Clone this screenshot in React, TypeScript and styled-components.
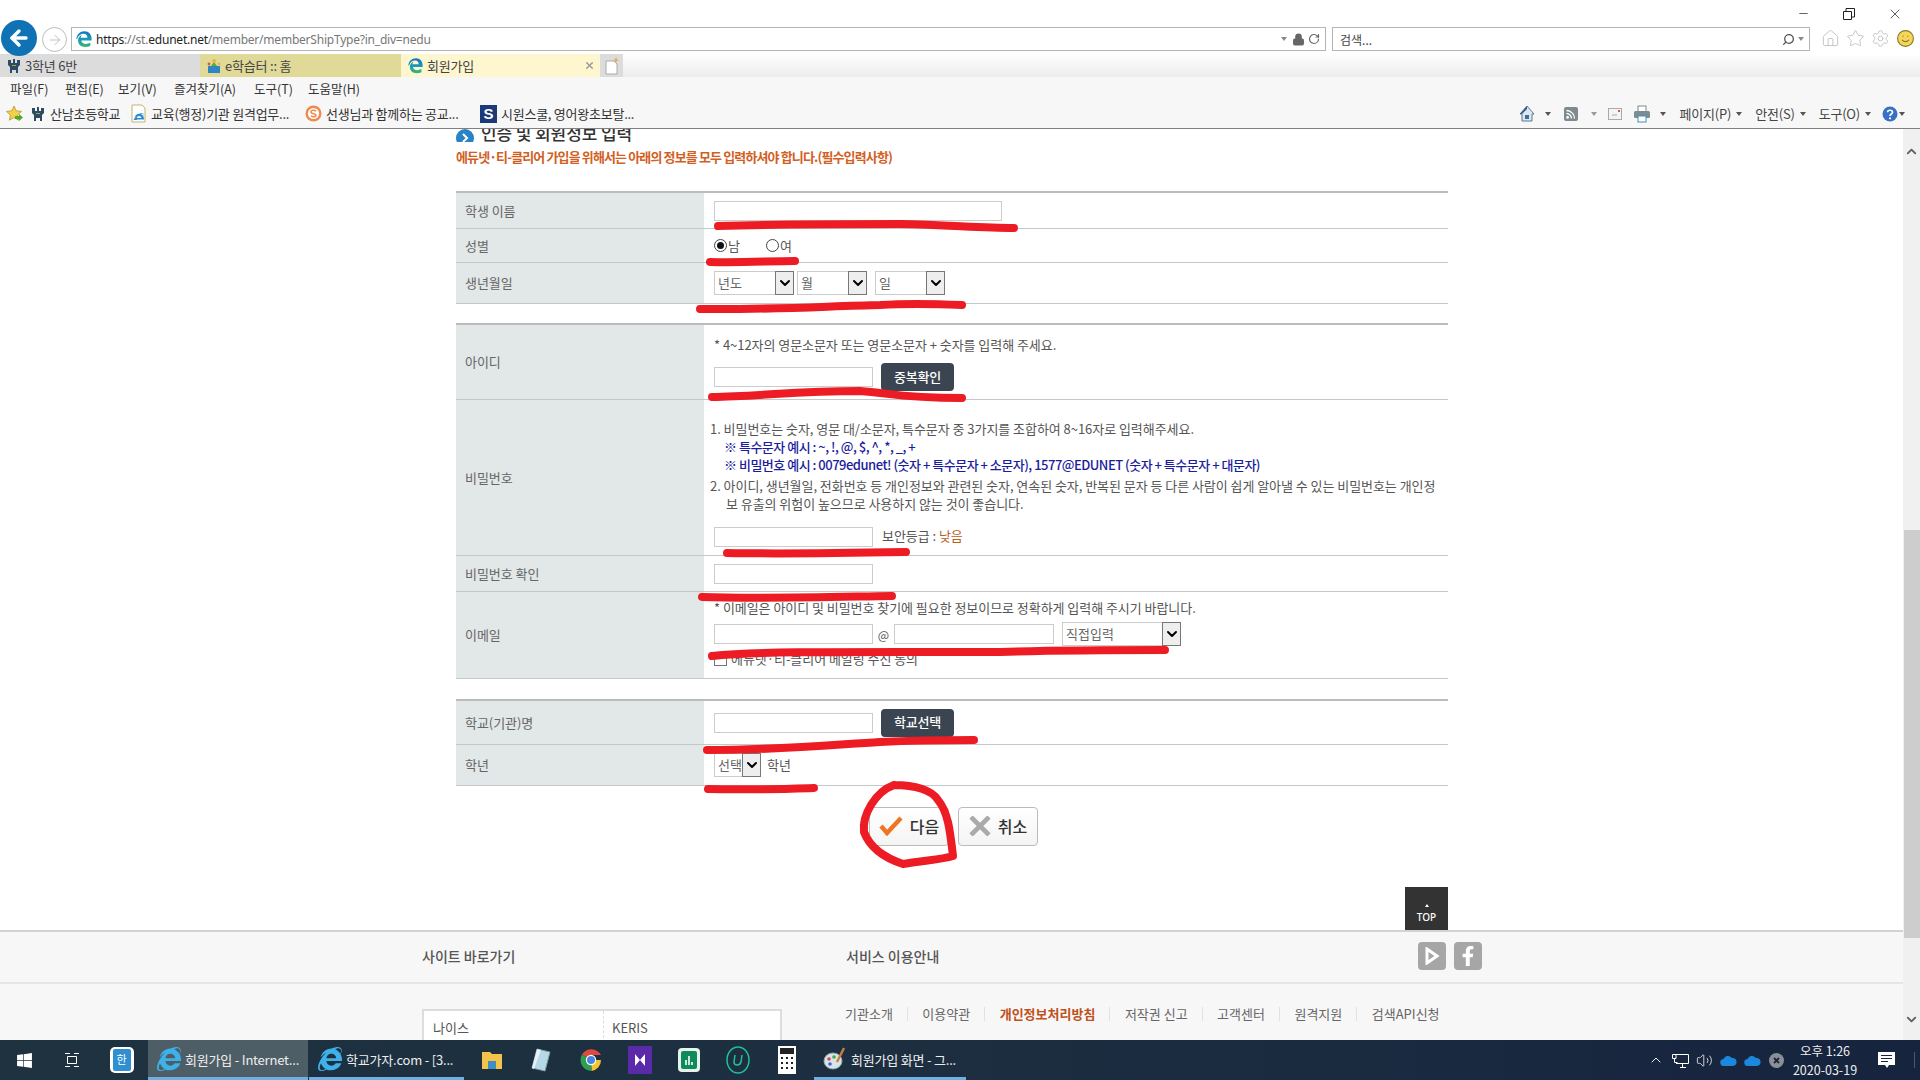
import React from 'react';
import styled, { createGlobalStyle } from 'styled-components';
import { ArrowLeft, ArrowRight, ChevronUp, ChevronDown, Home, Star, Settings, Smile, RotateCw, Lock, Search, Minus, X, Volume2 } from 'lucide-react';
import { FaInternetExplorer, FaFacebookF, FaWindows } from 'react-icons/fa';

const Global = createGlobalStyle`
  html, body { margin: 0; padding: 0; background: #fff; overflow: hidden; }
  * { box-sizing: border-box; }
  body { font-family: "Noto Sans CJK KR", "Noto Sans", sans-serif; }
`;

const Screen = styled.div`
  position: relative; width: 1920px; height: 1080px; overflow: hidden;
  display: flex; flex-direction: column; color: #333;
  font-family: "Noto Sans CJK KR", "Noto Sans", sans-serif;
`;

/* browser chrome */
const Chrome = styled.header`
  height: 129px; flex: none; display: flex; flex-direction: column;
  border-bottom: 1px solid #808080; background: #f7f7f7;
`;
const TitleBar = styled.div`
  height: 27px; background: #fff; display: flex; justify-content: flex-end; align-items: center;
  padding-right: 2px; color: #222;
`;
const WinBtn = styled.div`
  width: 46px; height: 27px; display: flex; align-items: center; justify-content: center;
`;
const AddressRow = styled.div`
  height: 27px; background: #fff; display: flex; align-items: flex-start; position: relative;
`;
const BackCircle = styled.div`
  width: 36px; height: 36px; border-radius: 50%; background: #0f72b5; color: #fff; flex: none;
  margin: -7px 0 0 1px; display: flex; align-items: center; justify-content: center; z-index: 1;
`;
const ForwardCircle = styled.div`
  width: 25px; height: 25px; border-radius: 50%; border: 1px solid #bbb; color: #bbb; flex: none;
  margin: 0 4px 0 5px; display: flex; align-items: center; justify-content: center;
`;
const FieldBox = styled.div<{ $w: number; $ml?: number; $pl?: number }>`
  width: ${p => p.$w}px; margin-left: ${p => p.$ml ?? 0}px; height: 24px; border: 1px solid #b4b4b4; flex: none;
  display: flex; align-items: center; padding: 0 5px 0 ${p => p.$pl ?? 5}px; font-size: 12px; color: #444; gap: 3px; background: #fff;
`;
const UrlText = styled.span`
  font-family: "Noto Sans", sans-serif; color: #777; font-size: 12px; letter-spacing: -0.22px;
  b { font-weight: 400; color: #222; }
`;
const Grow = styled.div`flex: 1;`;
const SmallTri = styled.span<{ $c?: string }>`
  width: 0; height: 0; flex: none; border-left: 3.5px solid transparent; border-right: 3.5px solid transparent;
  border-top: 4px solid ${p => p.$c ?? '#555'};
`;
const TopIcons = styled.div`
  display: flex; gap: 6px; margin-left: 11px; margin-top: 2px; color: #bdbdbd;
`;
const TabRow = styled.div`
  height: 23px; display: flex; background: linear-gradient(#fff, #ececec);
`;
const Tab = styled.div<{ $bg: string; $w: number }>`
  width: ${p => p.$w}px; background: ${p => p.$bg}; display: flex; align-items: center; gap: 3px;
  padding-left: 6px; font-size: 13px; color: #444; flex: none; letter-spacing: -0.2px;
`;
const TabClose = styled.span`
  margin-left: auto; margin-right: 5px; color: #999; display: flex;
`;
const NewTab = styled.div`
  width: 23px; background: #dcdcdc; flex: none; display: flex; align-items: center; justify-content: center;
`;
const MenuRow = styled.div`
  height: 22px; display: flex; align-items: center; padding-left: 10px; font-size: 12.5px; color: #333;
`;
const MenuItem = styled.span<{ $w?: number }>`
  width: ${p => (p.$w ? `${p.$w}px` : 'auto')}; flex: none;
`;
const FavRow = styled.div`
  height: 29px; display: flex; align-items: center; font-size: 13px; color: #333; padding: 0 15px 0 6px;
`;
const FavStar = styled.div`width: 24px; flex: none; display: flex;`;
const FavItem = styled.div<{ $w: number }>`
  width: ${p => p.$w}px; flex: none; display: flex; align-items: center; gap: 4px; letter-spacing: -0.25px;
`;
const Tools = styled.div`
  margin-left: auto; display: flex; align-items: center; color: #444;
`;
const ToolIcon = styled.span<{ $ml: number }>`
  margin-left: ${p => p.$ml}px; display: flex; align-items: center; gap: 5px; white-space: nowrap; font-size: 13px; letter-spacing: -0.2px;
`;

/* page */
const Viewport = styled.main`flex: 1; display: flex; min-height: 0;`;
const Page = styled.div`flex: 1; min-width: 0; overflow: hidden; background: #fff; display: flex; flex-direction: column;`;
const Content = styled.div`width: 992px; margin-left: 456px; flex: none;`;
const TitleClip = styled.div`
  height: 13px; overflow: hidden; display: flex; align-items: flex-end; gap: 7px;
`;
const TitleBullet = styled.span`
  width: 18px; height: 18px; border-radius: 50%; background: #2a83c4; color: #fff; flex: none; margin-bottom: -5px;
  display: flex; align-items: center; justify-content: center;
`;
const TitleText = styled.h2`
  margin: 0 0 -3px; font-size: 17px; line-height: 24px; font-weight: 500; color: #333; letter-spacing: -0.1px;
`;
const Warning = styled.p`
  margin: 0; height: 49px; padding-top: 5px; font-size: 13px; line-height: 20px; font-weight: 700;
  color: #d2601f; letter-spacing: -0.87px;
`;
const Table = styled.section<{ $mt?: number }>`
  border-top: 2px solid #bcbcbc; margin-top: ${p => p.$mt ?? 0}px;
`;
const Row = styled.div<{ $h: number }>`
  height: ${p => p.$h}px; display: grid; grid-template-columns: 248px 1fr; border-bottom: 1px solid #c4c8c8;
`;
const Label = styled.div`
  background: #e2e7e7; display: flex; align-items: center; padding: 0 0 1px 9px; font-size: 13px; color: #666; letter-spacing: -0.05px;
`;
const Cell = styled.div<{ $pt?: number }>`
  padding: ${p => p.$pt ?? 0}px 0 0 10px; display: flex; flex-direction: column;
  justify-content: ${p => (p.$pt === undefined ? 'center' : 'flex-start')};
  font-size: 13px; color: #555;
`;
const Line = styled.div<{ $gap?: number; $mt?: number }>`
  display: flex; align-items: center; gap: ${p => p.$gap ?? 8}px; margin-top: ${p => p.$mt ?? 0}px; flex: none;
`;
const TextInput = styled.input<{ $w?: number }>`
  width: ${p => p.$w ?? 159}px; height: 20px; border: 1px solid #ccc; background: #fff; padding: 0; margin: 0; flex: none; outline: none;
`;
const DarkBtn = styled.button`
  width: 73px; height: 28px; border: 0; border-radius: 4px; background: #3b4552; color: #fff; font: 500 13px "Noto Sans CJK KR", sans-serif;
  padding: 0 0 2px; flex: none; letter-spacing: -0.2px;
`;
const RadioLabel = styled.span<{ $w: number }>`
  width: ${p => p.$w}px; display: flex; align-items: center; gap: 1px; font-size: 13px; flex: none;
`;
const RadioDot = styled.span<{ $on?: boolean }>`
  width: 13px; height: 13px; border-radius: 50%; border: 1px solid #444; background: #fff; flex: none;
  display: flex; align-items: center; justify-content: center;
  &::after { content: ''; width: 7px; height: 7px; border-radius: 50%; background: ${p => (p.$on ? '#111' : 'transparent')}; }
`;
const Select = styled.div<{ $w: number; $ml?: number }>`
  width: ${p => p.$w}px; margin-left: ${p => p.$ml ?? 0}px; height: 24px; border: 1px solid #ccc; background: #fff; display: flex; align-items: center;
  padding: 0 0 1px 3px; font-size: 13px; color: #666; flex: none; justify-content: space-between;
`;
const SelectArrow = styled.span`
  width: 19px; height: 24px; border: 1px solid #777; background: #eee; color: #000; display: flex; align-items: center; justify-content: center; margin: 0 -1px -1px 0; flex: none;
`;
const Help = styled.div<{ $ml?: number; $mt?: number; $c?: string; $b?: boolean }>`
  line-height: 18px; white-space: nowrap; margin-left: ${p => p.$ml ?? 0}px; margin-top: ${p => p.$mt ?? 0}px;
  color: ${p => p.$c ?? '#555'}; font-weight: ${p => (p.$b ? 500 : 400)}; letter-spacing: ${p => (p.$b ? '-0.5px' : '-0.05px')}; font-size: 13px;
`;
const SecurityText = styled(Help)`margin: -2px 0 0 1px;`;
const Low = styled.span`color: #b8601f;`;
const AtMark = styled.span`width: 13px; flex: none; text-align: center; font-size: 12px;`;
const CheckBoxMark = styled.span`
  width: 13px; height: 13px; border: 1px solid #777; background: #fff; flex: none;
`;
const Actions = styled.div`
  display: flex; gap: 9px; margin: 21px 0 0 413px;
`;
const ActionBtn = styled.button`
  width: 80px; height: 39px; border: 1px solid #bbb; border-radius: 4px; background: linear-gradient(#fff, #f4f4f4);
  display: flex; align-items: center; justify-content: center; gap: 7px; font: 500 16px "Noto Sans CJK KR", sans-serif; color: #333; padding: 0 0 2px;
`;
const TopWrap = styled.div`display: flex; justify-content: flex-end; margin-top: 41px;`;
const TopBtn = styled.div`
  width: 43px; height: 43px; background: #333; color: #fff; display: flex; flex-direction: column; align-items: center; justify-content: flex-end;
  font: 500 10px "Noto Sans", sans-serif; padding-bottom: 6px; gap: 3px;
`;
const TopTri = styled.span`
  width: 0; height: 0; border-left: 2.5px solid transparent; border-right: 2.5px solid transparent; border-bottom: 3px solid #fff;
`;
const Footer = styled.footer`
  flex: 1; background: #f7f7f7; border-top: 2px solid #d2d2d2; display: flex; flex-direction: column;
`;
const FootHead = styled.div`
  height: 52px; border-bottom: 2px solid #e6e6e6; display: flex; align-items: center; padding: 0 0 2px 422px;
  font-size: 14px; font-weight: 500; color: #555; flex: none; letter-spacing: 0;
`;
const FootTitle = styled.span<{ $w?: number }>`width: ${p => (p.$w ? `${p.$w}px` : 'auto')}; flex: none;`;
const Social = styled.div`display: flex; gap: 8px; margin-left: 479px;`;
const SocialIcon = styled.span`
  width: 28px; height: 28px; border-radius: 4px; background: #a6a6a6; color: #fff; display: flex; align-items: center; justify-content: center;
`;
const FootBody = styled.div`display: flex; padding: 25px 0 0 422px;`;
const SiteBox = styled.div`
  width: 360px; height: 60px; background: #fff; border: 2px solid #ddd; display: grid; grid-template-columns: 179px 1fr; font-size: 13px; color: #555; flex: none;
`;
const SiteCell = styled.div`
  padding: 7px 0 0 9px; & + & { border-left: 1px dashed #ddd; padding-left: 8px; }
`;
const Links = styled.nav`display: flex; margin: -2px 0 0 63px; height: 14px; align-items: center; font-size: 13px; color: #666; letter-spacing: 0;`;
const LinkItem = styled.a<{ $on?: boolean }>`
  padding: 0 14px 0 14.5px; color: ${p => (p.$on ? '#c0501a' : '#666')}; font-weight: ${p => (p.$on ? 700 : 400)}; white-space: nowrap;
  border-right: 1px solid #e2e2e2; line-height: 14px;
  &:first-child { padding-left: 0; }
  &:last-child { border-right: 0; padding-right: 0; }
`;
const Scrollbar = styled.aside`
  width: 17px; flex: none; background: #f0f0f0; display: flex; flex-direction: column; align-items: center; color: #606060;
`;
const ScrollArrow = styled.div<{ $mt?: number }>`height: 22px; flex: none; display: flex; align-items: center; justify-content: center; margin-top: ${p => p.$mt ?? 0}px;`;
const Thumb = styled.div`width: 16px; height: 408px; background: #cdcdcd; margin-top: 368px; flex: none;`;

/* taskbar */
const Taskbar = styled.footer`
  height: 40px; flex: none; background: linear-gradient(90deg, #1e3240, #1c2e40 50%, #16243e); display: flex; align-items: stretch; color: #eee; font-size: 13px;
`;
const TaskIcon = styled.div<{ $w: number }>`
  width: ${p => p.$w}px; flex: none; display: flex; align-items: center; justify-content: center;
`;
const HanBadge = styled.div`
  width: 24px; height: 26px; border-radius: 5px; background: #fff; padding: 2px 3px; display: flex;
`;
const HanInner = styled.span`
  flex: 1; background: #2f8fd0; color: #fff; border-radius: 2px; font-size: 11px; line-height: 21px; text-align: center;
`;
const TaskApp = styled.div<{ $w: number; $active?: boolean; $ml?: number }>`
  width: ${p => p.$w}px; margin-left: ${p => p.$ml ?? 0}px; flex: none; display: flex; align-items: center; gap: 4px; padding: 1px 0 0 9px;
  background: ${p => (p.$active ? '#4e5e66' : 'transparent')}; border-bottom: 3px solid #6fb0e0; white-space: nowrap; overflow: hidden; letter-spacing: -0.2px;
`;
const Tray = styled.div`
  margin-left: auto; display: flex; align-items: center; padding-right: 5px;
`;
const TrayIcon = styled.div`width: 24px; flex: none; display: flex; align-items: center; justify-content: center;`;
const Clock = styled.div`
  width: 76px; margin-left: -1px; text-align: center; font: 12.5px/19px "Noto Sans CJK KR", sans-serif; flex: none; white-space: nowrap;
`;
const Notify = styled.div`
  width: 56px; margin-left: -4px; flex: none; display: flex; align-items: center; justify-content: center; border-right: 1px solid #556;
`;
const Ink = styled.svg`
  position: absolute; left: 0; top: 0; width: 1920px; height: 1080px; pointer-events: none; z-index: 5;
`;

const EdgeE = ({ s = 18 }: { s?: number }) => (
  <svg width={s} height={s} viewBox="0 0 20 20" style={{ flex: 'none' }}>
    <defs>
      <linearGradient id="edgeGrad" x1="0" y1="0" x2="0" y2="1">
        <stop offset="0" stopColor="#1377bd" />
        <stop offset="0.6" stopColor="#1aa0b4" />
        <stop offset="1" stopColor="#3db66f" />
      </linearGradient>
    </defs>
    <path fill="url(#edgeGrad)" d="M1.5 10C2 5 5.5 1.5 10.5 1.5c5 0 8 3.6 8 9v1.2H7c.3 2.6 2.5 3.8 5 3.8 1.8 0 3.4-.5 5-1.3v3.6c-1.5.8-3.4 1.2-5.6 1.2-5 0-8-3-8-7.2 0-2.6 1.5-5 4.6-6.4-1 .9-1.6 1.9-1.8 3.2h7.6c0-2.6-1.6-4.4-4.2-4.4-3.4 0-6.2 2.3-7.1 5.8z" />
  </svg>
);
const SchoolIcon = ({ s = 16 }: { s?: number }) => (
  <svg width={s} height={s} viewBox="0 0 16 16" style={{ flex: 'none' }}>
    <path d="M2 2h3v3h2V1h2v4h2V2h3v5l-2 2v6H10v-3H6v3H4V9L2 7z" fill="#2f4a63" />
    <path d="M6 7h4v1H6z" fill="#8fb23f" />
  </svg>
);
const KidsIcon = () => (
  <svg width="16" height="16" viewBox="0 0 16 16" style={{ flex: 'none' }}>
    <path d="M2 8h12v7H2z" fill="#2f86c4" />
    <path d="M5 8l3-4 3 4z" fill="#57ad3f" />
    <circle cx="8" cy="3" r="2" fill="#e8b93c" />
    <circle cx="3" cy="6" r="1.4" fill="#d9573f" />
    <circle cx="13" cy="6" r="1.4" fill="#e8b93c" />
  </svg>
);
const IeBadge = () => (
  <svg width="17" height="19" viewBox="0 0 17 19" style={{ flex: 'none' }}>
    <path d="M2 1h10l3 3v14H2z" fill="#fff" stroke="#c8b26a" />
    <foreignObject x="3" y="5" width="11" height="11"><FaInternetExplorer size={11} color="#2a8bd0" /></foreignObject>
  </svg>
);
const OrangeS = () => (
  <svg width="17" height="17" viewBox="0 0 17 17" style={{ flex: 'none' }}>
    <circle cx="8.5" cy="8.5" r="8" fill="#ef8a4a" />
    <circle cx="8.5" cy="8.5" r="5.6" fill="#fff" />
    <path d="M11 6.2C9.5 4.8 6 5 6 7c0 2.4 5 1 5 3.2 0 2-3.6 2-5 .6" stroke="#ef8a4a" strokeWidth="1.6" fill="none" />
  </svg>
);
const NavyS = styled.span`
  width: 17px; height: 18px; background: #1c3a78; color: #fff; font: 700 15px/18px "Liberation Sans", sans-serif; text-align: center; flex: none; letter-spacing: 0;
`;
const FavStarIcon = () => (
  <svg width="18" height="18" viewBox="0 0 18 18">
    <path d="M8 1l2.2 4.8 5.3.6-3.9 3.6 1 5.2L8 12.6 3.4 15.2l1-5.2L.5 6.4l5.3-.6z" fill="#f4cf4c" stroke="#b8932b" strokeWidth=".8" />
    <path d="M9 11h4V9l4 3.5L13 16v-2H9z" fill="#4fa82e" />
  </svg>
);
const ColorHome = () => (
  <svg width="16" height="17" viewBox="0 0 16 17">
    <path d="M8 1L1 9h2v7h10V9h2z" fill="#dfe7ee" stroke="#5d7990" />
    <path d="M8 1L1 9h2l5-5z" fill="#2d5c8a" />
    <rect x="6" y="10" width="4" height="4" fill="#3b6fa0" />
  </svg>
);
const FeedIcon = () => (
  <svg width="14" height="14" viewBox="0 0 14 14">
    <rect width="14" height="14" rx="2" fill="#7f8a8f" />
    <circle cx="3.6" cy="10.4" r="1.4" fill="#fff" />
    <path d="M2.5 6.5a5 5 0 015 5M2.5 3.5a8 8 0 018 8" stroke="#fff" strokeWidth="1.3" fill="none" />
  </svg>
);
const MailIcon = () => (
  <svg width="14" height="12" viewBox="0 0 14 12">
    <rect x=".5" y=".5" width="13" height="11" fill="#f4f4f4" stroke="#aaa" />
    <path d="M4 7h5" stroke="#aaa" />
    <rect x="10" y="2" width="2" height="2" fill="#d55" />
  </svg>
);
const PrintIcon = () => (
  <svg width="18" height="18" viewBox="0 0 18 18">
    <rect x="5" y="1" width="8" height="6" fill="#fff" stroke="#888" />
    <rect x="1" y="6" width="16" height="7" rx="1.5" fill="#7c8c94" />
    <rect x="5" y="11" width="8" height="6" fill="#fff" stroke="#3f93b5" />
  </svg>
);
const HelpBall = () => (
  <svg width="16" height="16" viewBox="0 0 16 16">
    <circle cx="8" cy="8" r="7.5" fill="#3770c4" />
    <path d="M5.5 6.2C5.6 3.6 10.5 3.6 10.5 6.2 10.5 8 8 8 8 10" stroke="#fff" strokeWidth="1.7" fill="none" />
    <circle cx="8" cy="12.3" r="1.1" fill="#fff" />
  </svg>
);
const PageNew = () => (
  <svg width="16" height="18" viewBox="0 0 16 18">
    <path d="M2 4h8l3 3v10H2z" fill="#fff" stroke="#aaa" />
    <path d="M12 0l.8 2.4L15 3l-2.2.8L12 6l-.8-2.2L9 3l2.2-.6z" fill="#f0a52c" />
  </svg>
);
const ChromeLogo = () => (
  <svg width="24" height="24" viewBox="0 0 24 24">
    <path d="M12 12L3 6.5A11 11 0 0122 7H12z" fill="#dd4b3e" />
    <path d="M12 12H22A11 11 0 0112.5 23z" fill="#f4c430" />
    <path d="M12 12l.5 11A11 11 0 013 6.5z" fill="#2f9e4f" />
    <circle cx="12" cy="12" r="5.2" fill="#fff" />
    <circle cx="12" cy="12" r="4" fill="#4a86e0" />
  </svg>
);
const Chev = ({ s = 16 }: { s?: number }) => <ChevronDown size={s} strokeWidth={3} />;

const Select3 = ({ w, t, ml }: { w: number; t: string; ml?: number }) => (
  <Select $w={w} $ml={ml}><span>{t}</span><SelectArrow><Chev /></SelectArrow></Select>
);

const TaskE = () => <FaInternetExplorer size={24} color="#3fb1ea" style={{ flex: 'none' }} />;
const Cloud = () => (
  <svg width="17" height="11" viewBox="0 0 17 11"><path d="M4 11a3.5 3.5 0 01-.5-7A5 5 0 0112 3a4 4 0 011 8z" fill="#1b88db" /></svg>
);

const App: React.FC = () => (
  <Screen>
    <Global />
    <Chrome>
      <TitleBar>
        <WinBtn><Minus size={13} strokeWidth={1.3} /></WinBtn>
        <WinBtn><svg width="12" height="12" viewBox="0 0 12 12" fill="none" stroke="#222"><path d="M.5 3.5h8v8h-8zM3 3V.5h8.5V9H9" /></svg></WinBtn>
        <WinBtn><X size={16} strokeWidth={1.1} /></WinBtn>
      </TitleBar>
      <AddressRow>
        <BackCircle><ArrowLeft size={24} strokeWidth={3.4} /></BackCircle>
        <ForwardCircle><ArrowRight size={16} strokeWidth={1.4} /></ForwardCircle>
        <FieldBox $w={1255} $pl={3}>
          <EdgeE />
          <UrlText><b>https</b>://st.<b>edunet.net</b>/member/memberShipType?in_div=nedu</UrlText>
          <Grow />
          <SmallTri $c="#888" />
          <Lock size={13} color="#666" fill="#666" style={{ marginLeft: 2 }} />
          <RotateCw size={12} color="#666" strokeWidth={2.4} />
        </FieldBox>
        <FieldBox $w={478} $ml={6} $pl={7}>
          검색...
          <Grow />
          <Search size={13} color="#555" strokeWidth={2.4} style={{ transform: 'scaleX(-1)' }} />
          <SmallTri $c="#888" />
        </FieldBox>
        <TopIcons>
          <Home size={19} strokeWidth={1.1} />
          <Star size={19} strokeWidth={1.1} />
          <Settings size={19} strokeWidth={1.1} />
          <Smile size={19} strokeWidth={1.4} color="#8a7a2a" fill="#f3d65a" />
        </TopIcons>
      </AddressRow>
      <TabRow>
        <Tab $bg="#dcdcdc" $w={200}><SchoolIcon />3학년 6반</Tab>
        <Tab $bg="#e0d998" $w={201}><KidsIcon />e학습터 :: 홈</Tab>
        <Tab $bg="#fdf6cf" $w={199}><EdgeE s={17} />회원가입<TabClose><X size={11} strokeWidth={3} /></TabClose></Tab>
        <NewTab><PageNew /></NewTab>
      </TabRow>
      <MenuRow>
        <MenuItem $w={55}>파일(F)</MenuItem>
        <MenuItem $w={53}>편집(E)</MenuItem>
        <MenuItem $w={56}>보기(V)</MenuItem>
        <MenuItem $w={80}>즐겨찾기(A)</MenuItem>
        <MenuItem $w={54}>도구(T)</MenuItem>
        <MenuItem>도움말(H)</MenuItem>
      </MenuRow>
      <FavRow>
        <FavStar><FavStarIcon /></FavStar>
        <FavItem $w={100}><SchoolIcon />산남초등학교</FavItem>
        <FavItem $w={175}><IeBadge />교육(행정)기관 원격업무...</FavItem>
        <FavItem $w={175}><OrangeS />선생님과 함께하는 공교...</FavItem>
        <FavItem $w={160}><NavyS>S</NavyS>시원스쿨, 영어왕초보탈...</FavItem>
        <Tools>
          <ToolIcon $ml={0}><ColorHome /></ToolIcon>
          <ToolIcon $ml={10}><SmallTri /></ToolIcon>
          <ToolIcon $ml={13}><FeedIcon /></ToolIcon>
          <ToolIcon $ml={13}><SmallTri $c="#999" /></ToolIcon>
          <ToolIcon $ml={11}><MailIcon /></ToolIcon>
          <ToolIcon $ml={11}><PrintIcon /></ToolIcon>
          <ToolIcon $ml={9}><SmallTri /></ToolIcon>
          <ToolIcon $ml={13}>페이지(P)<SmallTri /></ToolIcon>
          <ToolIcon $ml={13}>안전(S)<SmallTri /></ToolIcon>
          <ToolIcon $ml={13}>도구(O)<SmallTri /></ToolIcon>
          <ToolIcon $ml={11}><HelpBall /></ToolIcon>
          <ToolIcon $ml={1}><SmallTri /></ToolIcon>
        </Tools>
      </FavRow>
    </Chrome>
    <Viewport>
      <Page>
        <Content>
          <TitleClip>
            <TitleBullet><svg width="8" height="10" viewBox="0 0 8 10" fill="none" stroke="#fff" strokeWidth="2"><path d="M2 1l4 4-4 4" /></svg></TitleBullet>
            <TitleText>인증 및 회원정보 입력</TitleText>
          </TitleClip>
          <Warning>에듀넷·티-클리어 가입을 위해서는 아래의 정보를 모두 입력하셔야 합니다.(필수입력사항)</Warning>
          <Table>
            <Row $h={36}><Label>학생 이름</Label><Cell><TextInput $w={288} /></Cell></Row>
            <Row $h={34}><Label>성별</Label><Cell><Line $gap={0}><RadioLabel $w={52}><RadioDot $on />남</RadioLabel><RadioLabel $w={40}><RadioDot />여</RadioLabel></Line></Cell></Row>
            <Row $h={41}><Label>생년월일</Label><Cell><Line $gap={3}><Select3 w={80} t="년도" /><Select3 w={70} t="월" /><Select3 w={70} t="일" ml={5} /></Line></Cell></Row>
          </Table>
          <Table $mt={19}>
            <Row $h={75}>
              <Label>아이디</Label>
              <Cell $pt={11}>
                <Help>* 4~12자의 영문소문자 또는 영문소문자 + 숫자를 입력해 주세요.</Help>
                <Line $mt={9}><TextInput /><DarkBtn>중복확인</DarkBtn></Line>
              </Cell>
            </Row>
            <Row $h={156}>
              <Label>비밀번호</Label>
              <Cell $pt={20}>
                <Help $ml={-4}>1. 비밀번호는 숫자, 영문 대/소문자, 특수문자 중 3가지를 조합하여 8~16자로 입력해주세요.</Help>
                <Help $ml={10} $c="#1c1c9e" $b>※ 특수문자 예시 : ~, !, @, $, ^, *, _, +</Help>
                <Help $ml={10} $c="#1c1c9e" $b>※ 비밀번호 예시 : 0079edunet! (숫자 + 특수문자 + 소문자), 1577@EDUNET (숫자 + 특수문자 + 대문자)</Help>
                <Help $ml={-4} $mt={3}>2. 아이디, 생년월일, 전화번호 등 개인정보와 관련된 숫자, 연속된 숫자, 반복된 문자 등 다른 사람이 쉽게 알아낼 수 있는 비밀번호는 개인정</Help>
                <Help $ml={12}>보 유출의 위험이 높으므로 사용하지 않는 것이 좋습니다.</Help>
                <Line $mt={14}><TextInput /><SecurityText>보안등급 : <Low>낮음</Low></SecurityText></Line>
              </Cell>
            </Row>
            <Row $h={36}><Label>비밀번호 확인</Label><Cell><TextInput /></Cell></Row>
            <Row $h={87}>
              <Label>이메일</Label>
              <Cell $pt={7}>
                <Help>* 이메일은 아이디 및 비밀번호 찾기에 필요한 정보이므로 정확하게 입력해 주시기 바랍니다.</Help>
                <Line $mt={5} $gap={4}><TextInput /><AtMark>@</AtMark><TextInput $w={160} /><Select3 w={119} t="직접입력" ml={4} /></Line>
                <Line $mt={4} $gap={4}><CheckBoxMark /><Help>에듀넷·티-클리어 메일링 수신 동의</Help></Line>
              </Cell>
            </Row>
          </Table>
          <Table $mt={20}>
            <Row $h={44}><Label>학교(기관)명</Label><Cell><Line><TextInput /><DarkBtn>학교선택</DarkBtn></Line></Cell></Row>
            <Row $h={41}><Label>학년</Label><Cell><Line $gap={6}><Select3 w={47} t="선택" /><Help>학년</Help></Line></Cell></Row>
          </Table>
          <Actions>
            <ActionBtn><svg width="24" height="20" viewBox="0 0 24 20" fill="none" stroke="#ee7623" strokeWidth="4.4"><path d="M2 10l6 7L22 2" /></svg>다음</ActionBtn>
            <ActionBtn><svg width="22" height="20" viewBox="0 0 22 20" fill="none" stroke="#aaa" strokeWidth="4.6"><path d="M2 1l18 18M20 1L2 19" /></svg>취소</ActionBtn>
          </Actions>
          <TopWrap><TopBtn><TopTri />TOP</TopBtn></TopWrap>
        </Content>
        <Footer>
          <FootHead>
            <FootTitle $w={424}>사이트 바로가기</FootTitle>
            <FootTitle>서비스 이용안내</FootTitle>
            <Social>
              <SocialIcon><svg width="16" height="18" viewBox="0 0 16 18" fill="none" stroke="#fff" strokeWidth="3"><path d="M3 2l10 7-10 7z" /></svg></SocialIcon>
              <SocialIcon><FaFacebookF size={20} /></SocialIcon>
            </Social>
          </FootHead>
          <FootBody>
            <SiteBox><SiteCell>나이스</SiteCell><SiteCell>KERIS</SiteCell></SiteBox>
            <Links>
              <LinkItem>기관소개</LinkItem>
              <LinkItem>이용약관</LinkItem>
              <LinkItem $on>개인정보처리방침</LinkItem>
              <LinkItem>저작권 신고</LinkItem>
              <LinkItem>고객센터</LinkItem>
              <LinkItem>원격지원</LinkItem>
              <LinkItem>검색API신청</LinkItem>
            </Links>
          </FootBody>
        </Footer>
      </Page>
      <Scrollbar>
        <ScrollArrow $mt={11}><ChevronUp size={15} strokeWidth={3} /></ScrollArrow>
        <Thumb />
        <ScrollArrow $mt={70}><ChevronDown size={15} strokeWidth={3} /></ScrollArrow>
      </Scrollbar>
    </Viewport>
    <Taskbar>
      <TaskIcon $w={48}><FaWindows size={17} color="#fff" /></TaskIcon>
      <TaskIcon $w={47}>
        <svg width="16" height="16" viewBox="0 0 16 16" fill="none" stroke="#fff"><path d="M1 1.5h5M10 1.5h5M3.5 4.5h9v7h-9zM1 14.5h5M10 14.5h5" /></svg>
      </TaskIcon>
      <TaskIcon $w={53}><HanBadge><HanInner>한</HanInner></HanBadge></TaskIcon>
      <TaskApp $w={160} $active><TaskE />회원가입 - Internet...</TaskApp>
      <TaskApp $w={155} $ml={1}><TaskE />학교가자.com - [3...</TaskApp>
      <TaskIcon $w={3} />
      <TaskIcon $w={49}>
        <svg width="22" height="22" viewBox="0 0 22 22"><path d="M1 3h8l2 2h10v15H1z" fill="#f3c34c" /><rect x="7" y="12" width="8" height="8" fill="#3f8fc4" /></svg>
      </TaskIcon>
      <TaskIcon $w={50}>
        <svg width="22" height="24" viewBox="0 0 22 24"><path d="M7 1l13 3-5 19-13-3z" fill="#b7d8e6" stroke="#7f9aa8" /><path d="M7 1l4 1-7 19-2-1z" fill="#e6f2f7" /></svg>
      </TaskIcon>
      <TaskIcon $w={49}><ChromeLogo /></TaskIcon>
      <TaskIcon $w={49}>
        <svg width="24" height="28" viewBox="0 0 24 28"><rect width="24" height="28" fill="#5b2aa8" /><path d="M7 8l5 6-5 6zM12 14l5-6v12z" fill="#fff" /></svg>
      </TaskIcon>
      <TaskIcon $w={49}>
        <svg width="22" height="24" viewBox="0 0 22 24"><rect width="22" height="24" rx="4" fill="#e8f3ee" /><rect x="3" y="3" width="16" height="18" rx="2" fill="#0e8a5c" /><path d="M8 17v-5M11 17V8M14 17v-3" stroke="#fff" strokeWidth="1.6" /></svg>
      </TaskIcon>
      <TaskIcon $w={49}>
        <svg width="24" height="28" viewBox="0 0 24 28" fill="none"><ellipse cx="12" cy="14" rx="11" ry="13" stroke="#1fbf9a" strokeWidth="1.5" /><path d="M9 9l-1 7c0 4 6 4 7 0l1-7" stroke="#1fbf9a" strokeWidth="1.5" /></svg>
      </TaskIcon>
      <TaskIcon $w={49}>
        <svg width="18" height="28" viewBox="0 0 18 28"><rect width="18" height="28" fill="#fff" /><rect x="2" y="2" width="14" height="6" fill="#222" /><path d="M3 12h2M8 12h2M13 12h2M3 17h2M8 17h2M13 17h2M3 22h2M8 22h2M13 22h2" stroke="#222" strokeWidth="2" /></svg>
      </TaskIcon>
      <TaskApp $w={152} $ml={3}>
        <svg width="24" height="26" viewBox="0 0 24 26" style={{ flex: 'none' }}><ellipse cx="10" cy="15" rx="9" ry="8" fill="#d8e4ea" stroke="#8aa" /><circle cx="6" cy="13" r="1.8" fill="#d44" /><circle cx="11" cy="11" r="1.8" fill="#4a4" /><circle cx="7" cy="18" r="1.8" fill="#46c" /><path d="M14 16L21 2" stroke="#c97f3f" strokeWidth="2.4" /></svg>
        회원가입 화면 - 그...
      </TaskApp>
      <Tray>
        <TrayIcon><ChevronUp size={16} strokeWidth={1.5} /></TrayIcon>
        <TrayIcon>
          <svg width="17" height="15" viewBox="0 0 17 15" fill="none" stroke="#fff"><path d="M4 1.5h12.5v9H4M8 14.5h6M10.5 10.5v4M.5 1.5h3.5v4H.5zM2.5 5.5v4h3" /></svg>
        </TrayIcon>
        <TrayIcon><Volume2 size={17} strokeWidth={1.2} /></TrayIcon>
        <TrayIcon><Cloud /></TrayIcon>
        <TrayIcon><Cloud /></TrayIcon>
        <TrayIcon><svg width="15" height="15" viewBox="0 0 15 15"><circle cx="7.5" cy="7.5" r="7.5" fill="#8b8f96" /><path d="M5 5l5 5M10 5l-5 5" stroke="#1a2540" strokeWidth="1.8" /></svg></TrayIcon>
        <Clock>오후 1:26<br />2020-03-19</Clock>
        <Notify><svg width="17" height="16" viewBox="0 0 17 16"><path d="M0 0h17v13H11l-2 3-2-3H0z" fill="#fff" /><path d="M3 3.5h11M3 6.5h11M3 9.5h7" stroke="#1a2540" /></svg></Notify>
      </Tray>
    </Taskbar>
    <Ink viewBox="0 0 1920 1080" fill="none" stroke="#ed1c24" strokeLinecap="round" strokeLinejoin="round">
      <path strokeWidth="8" d="M718 226C780 224 830 224 900 224C950 225 980 228 1014 228" />
      <path strokeWidth="8" d="M710 262C740 263 770 261 795 261" />
      <path strokeWidth="8" d="M700 309C770 310 830 306 880 305C910 303 940 304 962 305" />
      <path strokeWidth="8" d="M712 397C760 396 800 391 860 391C890 393 900 398 962 398" />
      <path strokeWidth="8" d="M727 553C780 554 850 553 906 552" />
      <path strokeWidth="8" d="M702 597C760 599 830 597 892 596" />
      <path strokeWidth="8" d="M712 656C760 651 850 652 1000 652C1060 650 1120 650 1165 650" />
      <path strokeWidth="8" d="M707 750C780 750 830 745 880 742C920 740 950 740 974 740" />
      <path strokeWidth="8" d="M708 789C750 790 780 789 814 788" />
      <path strokeWidth="8" d="M894 785C915 785 932 790 938 800C948 812 950 830 953 856C940 860 925 860 903 864C885 858 870 848 864 832C862 815 875 792 894 785" />
    </Ink>
  </Screen>
);

export default App;
